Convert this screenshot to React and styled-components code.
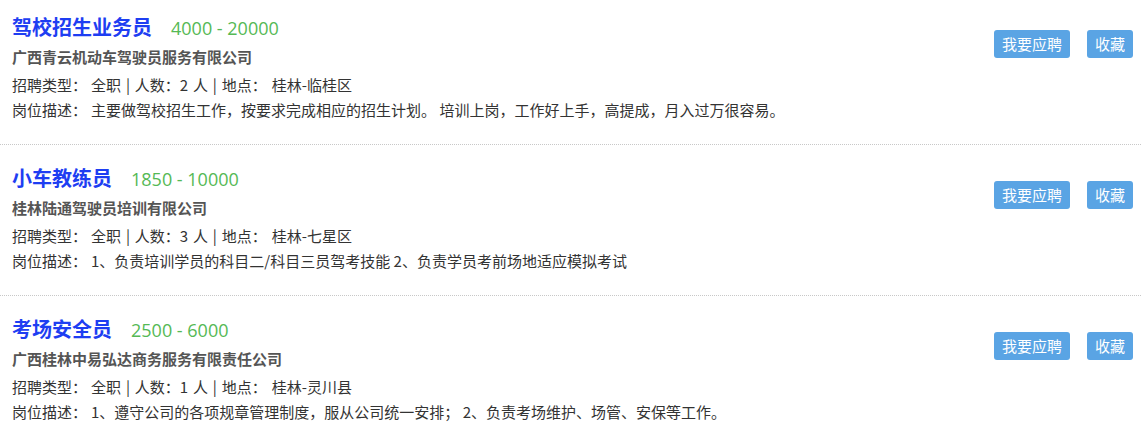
import React from "react";
import styled, { createGlobalStyle } from "styled-components";

const jobs = [
  {
    title: "驾校招生业务员",
    salary: "4000 - 20000",
    company: "广西青云机动车驾驶员服务有限公司",
    type: "全职",
    count: 2,
    place: "桂林-临桂区",
    desc: "主要做驾校招生工作，按要求完成相应的招生计划。 培训上岗，工作好上手，高提成，月入过万很容易。",
  },
  {
    title: "小车教练员",
    salary: "1850 - 10000",
    company: "桂林陆通驾驶员培训有限公司",
    type: "全职",
    count: 3,
    place: "桂林-七星区",
    desc: "1、负责培训学员的科目二/科目三员驾考技能 2、负责学员考前场地适应模拟考试",
  },
  {
    title: "考场安全员",
    salary: "2500 - 6000",
    company: "广西桂林中易弘达商务服务有限责任公司",
    type: "全职",
    count: 1,
    place: "桂林-灵川县",
    desc: "1、遵守公司的各项规章管理制度，服从公司统一安排； 2、负责考场维护、场管、安保等工作。",
  },
];

const JobList = () => {
  return (
    <>
      <GlobalStyle />
      <List>
        {jobs.map((job) => (
          <JobRow key={job.title}>
            <Info>
              <TitleLine>
                <Title>{job.title}</Title>
                <Salary>{job.salary}</Salary>
              </TitleLine>
              <Company>{job.company}</Company>
              <Meta>
                <Label>招聘类型：</Label>
                {job.type} | 人数：{job.count} 人 | 地点：<Gap />
                {job.place}
              </Meta>
              <Desc>
                <Label>岗位描述：</Label>
                {job.desc}
              </Desc>
            </Info>
            <Actions>
              <ActionButton>我要应聘</ActionButton>
              <ActionButton>收藏</ActionButton>
            </Actions>
          </JobRow>
        ))}
      </List>
    </>
  );
};

export default JobList;

const GlobalStyle = createGlobalStyle`
  body {
    margin: 0;
    background: #fff;
    font-family: "Noto Sans CJK SC", "Noto Sans", sans-serif;
    overflow: hidden;
  }
`;

const List = styled.div`
  margin-top: -6px;
`;

const JobRow = styled.div`
  display: flex;
  justify-content: space-between;
  align-items: flex-start;
  height: 150px;
  padding: 0 8px 0 12px;
  border-bottom: 1px dotted #c8c8c8;
`;

const Info = styled.div`
  padding-top: 18px;
`;

const TitleLine = styled.div`
  display: flex;
  align-items: baseline;
  height: 30px;
  line-height: 30px;
`;

const Title = styled.span`
  font-size: 20px;
  font-weight: bold;
  color: #1e3ef2;
`;

const Salary = styled.span`
  margin-left: 19px;
  font-size: 18px;
  color: #55b955;
  font-family: "Open Sans", "Noto Sans CJK SC", sans-serif;
`;

const Company = styled.div`
  font-size: 15px;
  font-weight: bold;
  color: #555;
  line-height: 30px;
`;

const Meta = styled.div`
  font-size: 15px;
  color: #333;
  line-height: 26px;
  word-spacing: 1.5px;
`;

const Desc = styled.div`
  font-size: 15px;
  color: #333;
  line-height: 24px;
`;

const Label = styled.span`
  margin-right: 4px;
`;

const Gap = styled.span`
  display: inline-block;
  width: 5px;
`;

const Actions = styled.div`
  display: flex;
  gap: 17px;
  margin-top: 36px;
`;

const ActionButton = styled.button`
  border: 0;
  border-radius: 3px;
  height: 28px;
  padding: 0 8px;
  background-color: #5aa4e4;
  color: #fff;
  font-family: "Noto Sans CJK SC", sans-serif;
  font-size: 15px;
  line-height: 28px;
  cursor: pointer;
`;
